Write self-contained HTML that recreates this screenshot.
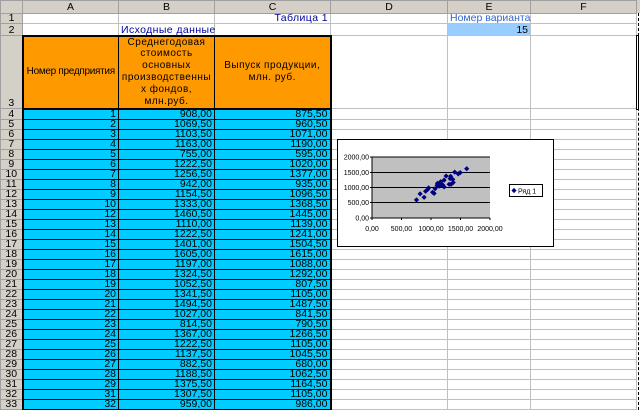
<!DOCTYPE html>
<html><head><meta charset="utf-8"><style>
*{margin:0;padding:0;box-sizing:border-box}
body{width:640px;height:410px;overflow:hidden;background:#fff;font-family:"Liberation Sans","DejaVu Sans",sans-serif;font-size:10.5px;position:relative}
table{border-collapse:collapse;table-layout:fixed;position:absolute;left:0;top:0;width:636px}
td{border:1px solid #c0c0c0;padding:0 2px;white-space:nowrap;overflow:visible;line-height:9px;height:10px;vertical-align:bottom}
td.h{background:#d4d0c8;text-align:center;color:#000;border-color:#a0a0a0;padding:0}
tr.hd td{height:13px;line-height:12px;vertical-align:middle}
tr.d td.a,tr.d td.b,tr.d td.c{background:#00ccff;border:1px solid #000;text-align:right;color:#000;overflow:hidden}
tr.d td.c{border-right:2px solid #000}
tr.d td.a{border-left:2px solid #000}
tr.o td.o{background:#ff9900;border:1px solid #000;text-align:center;vertical-align:middle;line-height:11.8px;font-size:10px;padding:0;white-space:nowrap;overflow:hidden;height:73px;letter-spacing:0.5px}
</style></head><body>
<table>
<colgroup><col style="width:22px"><col style="width:96px"><col style="width:96px"><col style="width:116px"><col style="width:117px"><col style="width:83px"><col style="width:106px"></colgroup>
<tr class="hd"><td class="h"></td><td class="h">A</td><td class="h">B</td><td class="h">C</td><td class="h">D</td><td class="h">E</td><td class="h">F</td></tr>
<tr><td class="h">1</td><td></td><td></td><td style="text-align:right;color:#0000a0;letter-spacing:0.4px">Таблица 1</td><td></td><td style="color:#3366cc;overflow:visible">Номер варианта</td><td></td></tr>
<tr style="height:12px"><td class="h" style="height:12px">2</td><td style="height:12px"></td><td style="color:#0000a0;height:12px;letter-spacing:0.4px">Исходные данные</td><td></td><td></td><td style="background:#99ccff;text-align:right">15</td><td></td></tr>
<tr class="o" style="height:73px"><td class="h" style="height:73px;vertical-align:bottom">3</td><td class="o" style="border-left:2px solid #000;border-top:2px solid #000;border-bottom:2px solid #000;letter-spacing:-0.3px">Номер предприятия</td><td class="o" style="border-top:2px solid #000;border-bottom:2px solid #000">Среднегодовая<br>стоимость<br>основных<br>производственны<br>х фондов,<br>млн.руб.</td><td class="o" style="border-top:2px solid #000;border-right:2px solid #000;border-bottom:2px solid #000">Выпуск продукции,<br>млн. руб.</td><td></td><td></td><td></td></tr>
<tr class="d"><td class="h">4</td><td class="a">1</td><td class="b">908,00</td><td class="c">875,50</td><td></td><td></td><td></td></tr>
<tr class="d"><td class="h">5</td><td class="a">2</td><td class="b">1069,50</td><td class="c">960,50</td><td></td><td></td><td></td></tr>
<tr class="d"><td class="h">6</td><td class="a">3</td><td class="b">1103,50</td><td class="c">1071,00</td><td></td><td></td><td></td></tr>
<tr class="d"><td class="h">7</td><td class="a">4</td><td class="b">1163,00</td><td class="c">1190,00</td><td></td><td></td><td></td></tr>
<tr class="d"><td class="h">8</td><td class="a">5</td><td class="b">755,00</td><td class="c">595,00</td><td></td><td></td><td></td></tr>
<tr class="d"><td class="h">9</td><td class="a">6</td><td class="b">1222,50</td><td class="c">1020,00</td><td></td><td></td><td></td></tr>
<tr class="d"><td class="h">10</td><td class="a">7</td><td class="b">1256,50</td><td class="c">1377,00</td><td></td><td></td><td></td></tr>
<tr class="d"><td class="h">11</td><td class="a">8</td><td class="b">942,00</td><td class="c">935,00</td><td></td><td></td><td></td></tr>
<tr class="d"><td class="h">12</td><td class="a">9</td><td class="b">1154,50</td><td class="c">1096,50</td><td></td><td></td><td></td></tr>
<tr class="d"><td class="h">13</td><td class="a">10</td><td class="b">1333,00</td><td class="c">1368,50</td><td></td><td></td><td></td></tr>
<tr class="d"><td class="h">14</td><td class="a">12</td><td class="b">1460,50</td><td class="c">1445,00</td><td></td><td></td><td></td></tr>
<tr class="d"><td class="h">15</td><td class="a">13</td><td class="b">1110,00</td><td class="c">1139,00</td><td></td><td></td><td></td></tr>
<tr class="d"><td class="h">16</td><td class="a">14</td><td class="b">1222,50</td><td class="c">1241,00</td><td></td><td></td><td></td></tr>
<tr class="d"><td class="h">17</td><td class="a">15</td><td class="b">1401,00</td><td class="c">1504,50</td><td></td><td></td><td></td></tr>
<tr class="d"><td class="h">18</td><td class="a">16</td><td class="b">1605,00</td><td class="c">1615,00</td><td></td><td></td><td></td></tr>
<tr class="d"><td class="h">19</td><td class="a">17</td><td class="b">1197,00</td><td class="c">1088,00</td><td></td><td></td><td></td></tr>
<tr class="d"><td class="h">20</td><td class="a">18</td><td class="b">1324,50</td><td class="c">1292,00</td><td></td><td></td><td></td></tr>
<tr class="d"><td class="h">21</td><td class="a">19</td><td class="b">1052,50</td><td class="c">807,50</td><td></td><td></td><td></td></tr>
<tr class="d"><td class="h">22</td><td class="a">20</td><td class="b">1341,50</td><td class="c">1105,00</td><td></td><td></td><td></td></tr>
<tr class="d"><td class="h">23</td><td class="a">21</td><td class="b">1494,50</td><td class="c">1487,50</td><td></td><td></td><td></td></tr>
<tr class="d"><td class="h">24</td><td class="a">22</td><td class="b">1027,00</td><td class="c">841,50</td><td></td><td></td><td></td></tr>
<tr class="d"><td class="h">25</td><td class="a">23</td><td class="b">814,50</td><td class="c">790,50</td><td></td><td></td><td></td></tr>
<tr class="d"><td class="h">26</td><td class="a">24</td><td class="b">1367,00</td><td class="c">1266,50</td><td></td><td></td><td></td></tr>
<tr class="d"><td class="h">27</td><td class="a">25</td><td class="b">1222,50</td><td class="c">1105,00</td><td></td><td></td><td></td></tr>
<tr class="d"><td class="h">28</td><td class="a">26</td><td class="b">1137,50</td><td class="c">1045,50</td><td></td><td></td><td></td></tr>
<tr class="d"><td class="h">29</td><td class="a">27</td><td class="b">882,50</td><td class="c">680,00</td><td></td><td></td><td></td></tr>
<tr class="d"><td class="h">30</td><td class="a">28</td><td class="b">1188,50</td><td class="c">1062,50</td><td></td><td></td><td></td></tr>
<tr class="d"><td class="h">31</td><td class="a">29</td><td class="b">1375,50</td><td class="c">1164,50</td><td></td><td></td><td></td></tr>
<tr class="d"><td class="h">32</td><td class="a">31</td><td class="b">1307,50</td><td class="c">1105,00</td><td></td><td></td><td></td></tr>
<tr class="d"><td class="h">33</td><td class="a">32</td><td class="b">959,00</td><td class="c">986,00</td><td></td><td></td><td></td></tr>
</table>
<div style="position:absolute;left:637px;top:0;width:3px;height:13px;background:#d4d0c8"></div>
<div style="position:absolute;left:638px;top:13px;width:0;height:397px;border-left:1px dashed #000"></div>
<div style="position:absolute;left:636px;top:35px;width:3px;height:75px;border:1px solid #000"></div>
<svg style="position:absolute;left:337px;top:139px" width="217" height="108" viewBox="0 0 217 108" font-family="Liberation Sans, sans-serif" font-size="7">
<rect x="0.5" y="0.5" width="216" height="107" fill="#fff" stroke="#000"/>
<rect x="35" y="18" width="118" height="61" fill="#c0c0c0"/>
<g stroke="#000" stroke-width="1">
<line x1="35" y1="18" x2="153" y2="18"/><line x1="35" y1="33.5" x2="153" y2="33.5"/><line x1="35" y1="48.5" x2="153" y2="48.5"/><line x1="35" y1="63.5" x2="153" y2="63.5"/><line x1="35" y1="79" x2="153" y2="79"/>
<line x1="35" y1="18" x2="35" y2="81"/>
<line x1="64.5" y1="79" x2="64.5" y2="81"/><line x1="94" y1="79" x2="94" y2="81"/><line x1="123.5" y1="79" x2="123.5" y2="81"/><line x1="153" y1="79" x2="153" y2="81"/>
<line x1="33" y1="18" x2="35" y2="18"/><line x1="33" y1="33.5" x2="35" y2="33.5"/><line x1="33" y1="48.5" x2="35" y2="48.5"/><line x1="33" y1="63.5" x2="35" y2="63.5"/><line x1="33" y1="79" x2="35" y2="79"/>
</g>
<g text-anchor="end"><text x="32" y="20.5">2000,00</text><text x="32" y="36">1500,00</text><text x="32" y="51">1000,00</text><text x="32" y="66">500,00</text><text x="32" y="81.5">0,00</text></g>
<g text-anchor="middle"><text x="35" y="92">0,00</text><text x="64.5" y="92">500,00</text><text x="94" y="92">1000,00</text><text x="123.5" y="92">1500,00</text><text x="153" y="92">2000,00</text></g>
<defs><path id="m" d="M0,-2.6L2.6,0L0,2.6L-2.6,0Z" fill="#000080"/></defs>
<g>
<use href="#m" x="88.6" y="52.3"/><use href="#m" x="98.1" y="49.7"/><use href="#m" x="100.1" y="46.3"/><use href="#m" x="103.6" y="42.7"/><use href="#m" x="79.5" y="60.9"/><use href="#m" x="107.1" y="47.9"/><use href="#m" x="109.1" y="37"/><use href="#m" x="90.6" y="50.5"/><use href="#m" x="103.1" y="45.6"/><use href="#m" x="113.6" y="37.3"/><use href="#m" x="121.2" y="34.9"/><use href="#m" x="100.5" y="44.3"/><use href="#m" x="107.1" y="41.1"/><use href="#m" x="117.7" y="33.1"/><use href="#m" x="129.7" y="29.7"/><use href="#m" x="105.6" y="45.8"/><use href="#m" x="113.1" y="39.6"/><use href="#m" x="97.1" y="54.4"/><use href="#m" x="114.1" y="45.3"/><use href="#m" x="123.2" y="33.6"/><use href="#m" x="95.6" y="53.3"/><use href="#m" x="83.1" y="54.9"/><use href="#m" x="115.7" y="40.4"/><use href="#m" x="102.1" y="47.1"/><use href="#m" x="87.1" y="58.3"/><use href="#m" x="105.1" y="46.6"/><use href="#m" x="116.2" y="43.5"/><use href="#m" x="112.1" y="45.3"/><use href="#m" x="91.6" y="48.9"/>
</g>
<rect x="172.5" y="45.5" width="33" height="12" fill="#fff" stroke="#000"/>
<use href="#m" x="177" y="51.5"/>
<text x="181" y="54.5">Ряд 1</text>
</svg>
</body></html>
